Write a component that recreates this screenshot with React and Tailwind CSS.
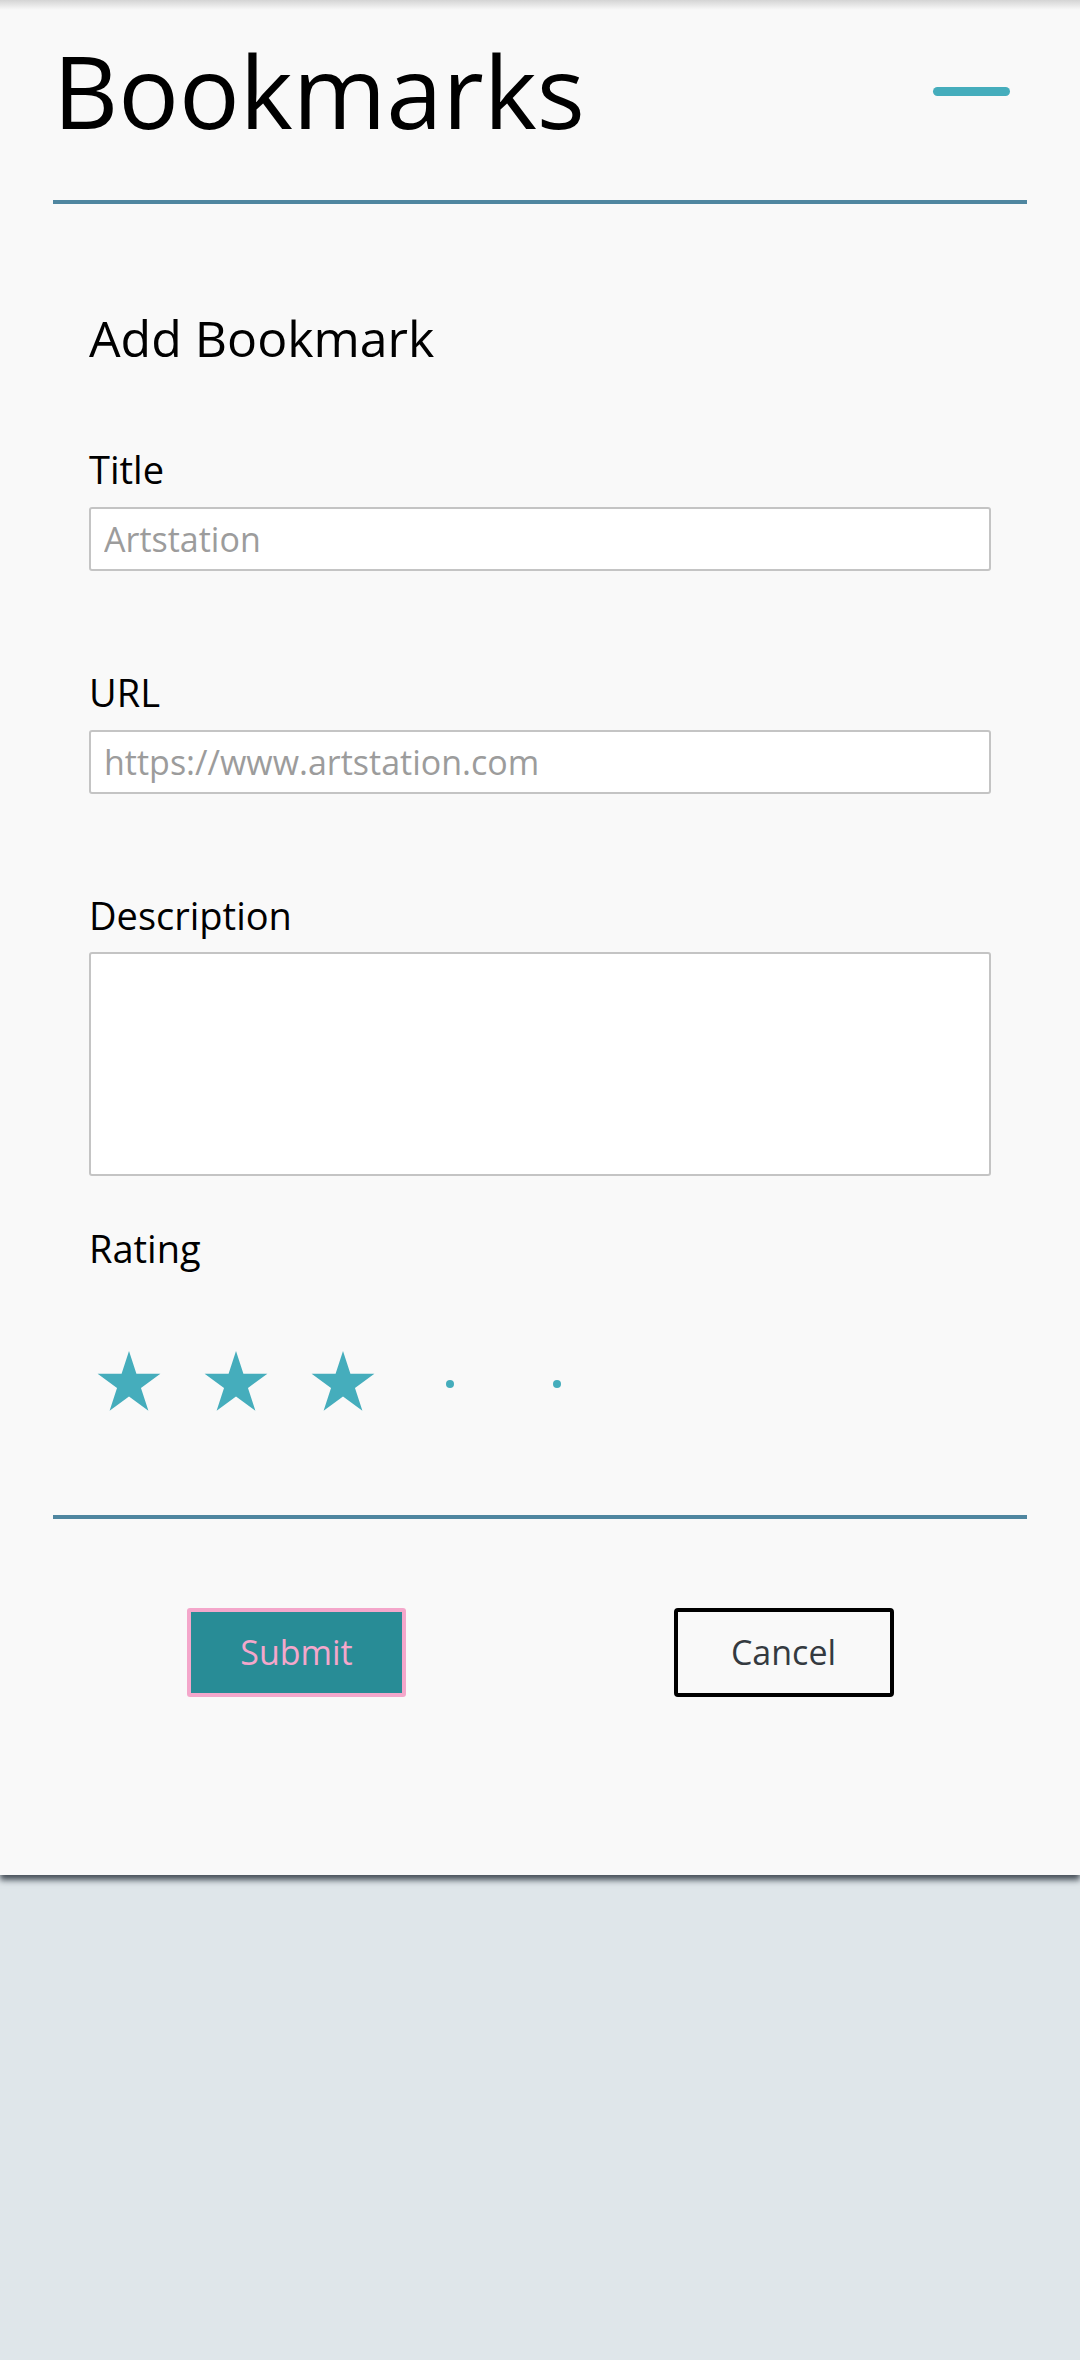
import React, { useState } from 'react';

const TEAL = '#45adbc';

function Star() {
  return (
    <svg width="66" height="66" viewBox="0 0 66 66" className="shrink-0">
      <polygon
        fill={TEAL}
        points="33,0 40.41,22.81 64.38,22.8 44.98,36.89 52.4,59.7 33,45.6 13.6,59.7 21.02,36.89 1.62,22.8 25.59,22.81"
      />
    </svg>
  );
}

function Dot() {
  return (
    <div className="w-[66px] h-[66px] shrink-0 flex items-center justify-center">
      <div className="w-[8px] h-[8px] rounded-full bg-[#45adbc]" />
    </div>
  );
}

const Field = ({ label, placeholder, className }) => (
  <div className={className}>
    <label className="block text-[38px] leading-none text-black mb-[19px]">{label}</label>
    <input
      type="text"
      placeholder={placeholder}
      className="block w-full h-[64px] bg-white border-2 border-[#c4c4c4] rounded-[3px] pl-[13px] text-[34px] text-black placeholder:text-[#9c9c9c] outline-none"
    />
  </div>
);

export default function App() {
  const [rating] = useState(3);

  return (
    <div className="min-h-[2360px] bg-[#dfe6ea]" style={{ fontFamily: '"Open Sans", "Noto Sans", sans-serif' }}>
      <div className="bg-[#f9f9f9] px-[53px] h-[1875px] shadow-[0_5px_6px_rgba(20,30,40,0.75)] relative">
        <div className="absolute inset-x-0 top-0 h-[10px] bg-gradient-to-b from-[#d4d4d4] to-transparent" />

        {/* Header */}
        <div className="flex items-start justify-between pt-[40px]">
          <h1 className="text-[101px] leading-none font-normal text-black">Bookmarks</h1>
          <div className="mt-[47px] mr-[17px] w-[77px] h-[9px] rounded-full bg-[#45adbc]" />
        </div>
        <div className="mt-[59px] h-[4px] bg-[#4f86a0]" />

        {/* Form */}
        <div className="px-[36px]">
          <h2 className="mt-[109px] text-[50px] leading-none text-black">Add Bookmark</h2>

          <Field label="Title" placeholder="Artstation" className="mt-[87px]" />
          <Field label="URL" placeholder="https://www.artstation.com" className="mt-[102px]" />

          <div className="mt-[102px]">
            <label className="block text-[38px] leading-none text-black mb-[18px]">Description</label>
            <textarea className="block w-full h-[224px] bg-white border-2 border-[#c4c4c4] rounded-[3px] resize-none outline-none" />
          </div>

          <div className="mt-[53px] text-[38px] leading-none text-black">Rating</div>
          <div className="mt-[84px] ml-[7px] flex gap-[41px]">
            {[1, 2, 3, 4, 5].map((i) => (i <= rating ? <Star key={i} /> : <Dot key={i} />))}
          </div>
        </div>

        <div className="mt-[98px] h-[4px] bg-[#4f86a0]" />

        {/* Buttons */}
        <div className="mt-[89px] grid grid-cols-2">
          <div className="flex justify-center">
            <button className="w-[219px] h-[89px] bg-[#288c96] border-4 border-[#f4a7cb] rounded-[3px] text-[34px] text-[#f4a7cb]">
              Submit
            </button>
          </div>
          <div className="flex justify-center">
            <button className="w-[220px] h-[89px] bg-transparent border-4 border-black rounded-[4px] text-[34px] text-[#343a40]">
              Cancel
            </button>
          </div>
        </div>
      </div>
    </div>
  );
}
